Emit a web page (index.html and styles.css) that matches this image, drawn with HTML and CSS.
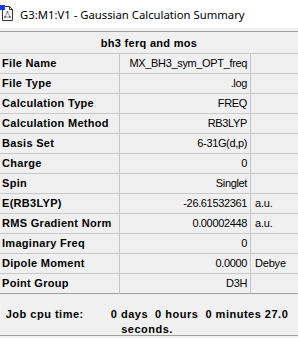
FILE: index.html
```html
<!DOCTYPE html>
<html>
<head>
<meta charset="utf-8">
<link rel="stylesheet" href="styles.css">
</head>
<body>
<div class="window">
  <div class="titlebar">
    <svg class="icon" width="14" height="18" viewBox="0 0 14 18">
      <path d="M2.5 2.5 H9.5 L12.5 5.5 V16.5 H2.5 Z" fill="#fff" stroke="#333" stroke-width="1"/>
      <path d="M9.5 2.5 V5.5 H12.5" fill="none" stroke="#333" stroke-width="1"/>
      <circle cx="7.5" cy="8" r="1" fill="#555"/>
      <circle cx="5" cy="13" r="1" fill="#555"/>
      <circle cx="10" cy="13" r="1" fill="#555"/>
      <path d="M7.5 8 L5 13 M7.5 8 L10 13 M5 13 H10" stroke="#777" stroke-width="0.8"/>
      <rect x="0" y="1" width="5" height="5" fill="#1a3fd8"/>
    </svg>
    <span class="title">G3:M1:V1 - Gaussian Calculation Summary</span>
  </div>
  <div class="summary">
    <div class="header">bh3 ferq and mos</div>
    <div class="grid">
      <div class="lbl">File Name</div><div class="val">MX_BH3_sym_OPT_freq</div><div class="unit"></div>
      <div class="lbl">File Type</div><div class="val">.log</div><div class="unit"></div>
      <div class="lbl">Calculation Type</div><div class="val">FREQ</div><div class="unit"></div>
      <div class="lbl">Calculation Method</div><div class="val">RB3LYP</div><div class="unit"></div>
      <div class="lbl">Basis Set</div><div class="val">6-31G(d,p)</div><div class="unit"></div>
      <div class="lbl">Charge</div><div class="val">0</div><div class="unit"></div>
      <div class="lbl">Spin</div><div class="val">Singlet</div><div class="unit"></div>
      <div class="lbl">E(RB3LYP)</div><div class="val">-26.61532361</div><div class="unit">a.u.</div>
      <div class="lbl">RMS Gradient Norm</div><div class="val">0.00002448</div><div class="unit">a.u.</div>
      <div class="lbl">Imaginary Freq</div><div class="val">0</div><div class="unit"></div>
      <div class="lbl">Dipole Moment</div><div class="val">0.0000</div><div class="unit">Debye</div>
      <div class="lbl">Point Group</div><div class="val">D3H</div><div class="unit"></div>
    </div>
    <div class="footer">
      <p class="cpu">Job cpu time:<span class="gap"></span>0 days&nbsp;&nbsp;0 hours&nbsp;&nbsp;0&nbsp;minutes&nbsp;27.0 seconds.</p>
    </div>
  </div>
</div>
</body>
</html>
```
FILE: styles.css
```css
html, body {
  margin: 0;
  padding: 0;
  background: #f0f0f0;
}
.window {
  width: 298px;
  height: 338px;
  overflow: hidden;
  background: #f0f0f0;
}
.titlebar {
  height: 28px;
  background: #ffffff;
  display: flex;
  align-items: center;
  gap: 6px;
}
.icon {
  margin-top: -2px;
}
.title {
  font-family: "Noto Sans", sans-serif;
  font-size: 11.3px;
  color: #000;
}
.summary {
  margin-top: 3px;
  border-top: 1px solid #a0a0a0;
  font-family: "Liberation Sans", Arial, sans-serif;
  font-size: 11px;
  color: #000;
}
.header {
  height: 21px;
  line-height: 23px;
  text-align: center;
  font-weight: bold;
  letter-spacing: 0.3px;
  border-bottom: 1px solid #c8c8c8;
}
.grid {
  display: grid;
  grid-template-columns: 120px 131px 1fr;
  grid-auto-rows: 20px;
}
.grid > div {
  border-bottom: 1px solid #c8c8c8;
  box-sizing: border-box;
  line-height: 19px;
  white-space: nowrap;
}
.lbl {
  font-weight: bold;
  letter-spacing: 0.3px;
  padding-left: 2px;
  border-right: 1px solid #c8c8c8;
}
.val {
  text-align: right;
  letter-spacing: -0.35px;
  padding-right: 3px;
  border-right: 1px solid #c8c8c8;
}
.unit {
  padding-left: 4px;
  letter-spacing: -0.2px;
}
.grid > div:nth-last-child(-n+3) {
  border-bottom: 1px solid #a0a0a0;
}
.footer {
  height: 42px;
  border-bottom: 1px solid #a0a0a0;
  padding: 13px 6px 0 2px;
  box-sizing: border-box;
}
.cpu {
  margin: 0;
  text-align: center;
  font-weight: bold;
  letter-spacing: 0.5px;
  line-height: 15px;
}
.gap {
  display: inline-block;
  width: 27px;
}
```
